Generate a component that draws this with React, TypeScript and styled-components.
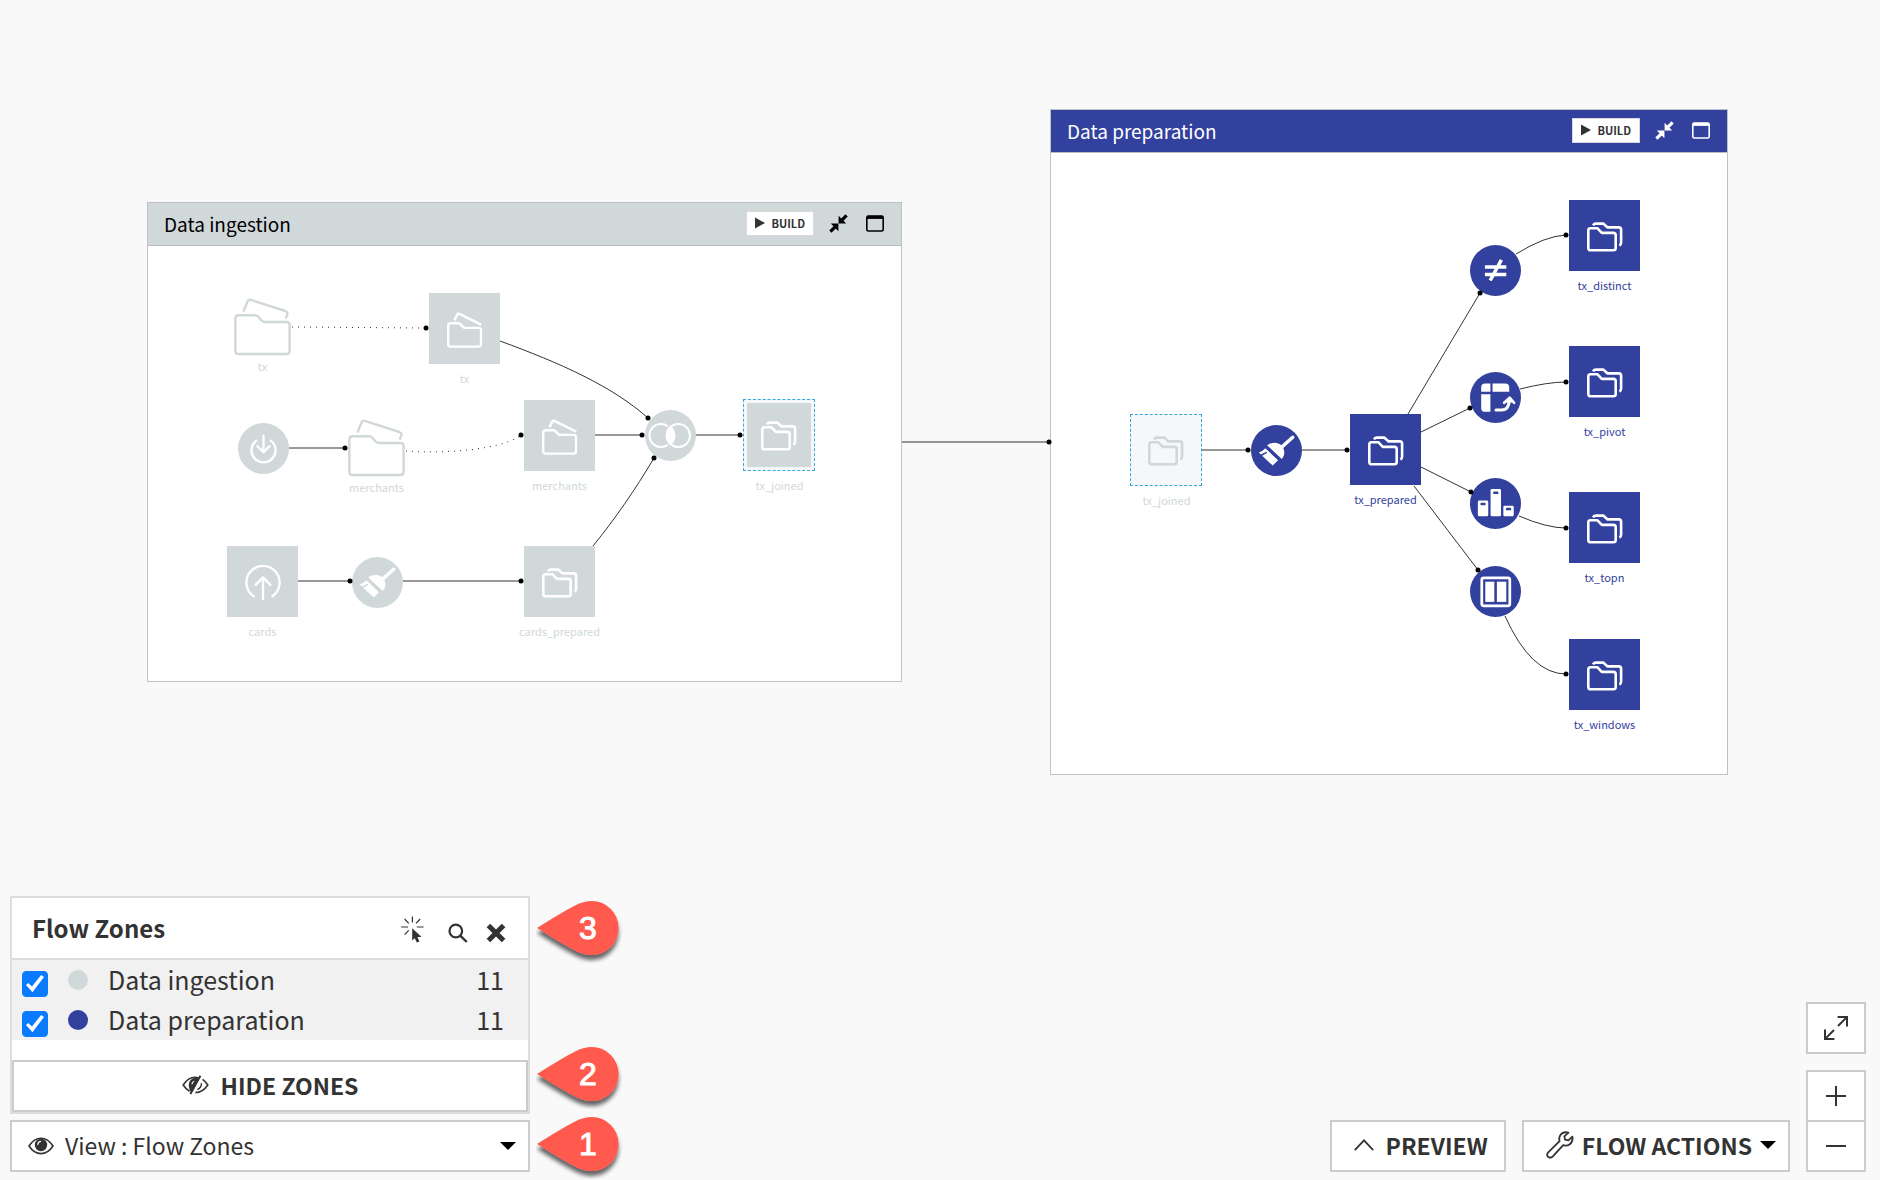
import React from "react";
import styled, { createGlobalStyle } from "styled-components";

const GREY = "#d0d8da";
const INDIGO = "#32419d";
const INK = "#333333";

const GlobalStyle = createGlobalStyle`
  *, *::before, *::after { box-sizing: border-box; }
  body {
    margin: 0;
    background: #f9f9f9;
    color: ${INK};
    font-family: "Noto Sans CJK SC", "Noto Sans", sans-serif;
  }
  button, select, input { font: inherit; color: inherit; margin: 0; }
  svg { display: block; flex: none; }
`;

const Page = styled.main`
  display: grid;
  grid-template: minmax(100vh, auto) / minmax(0, 1fr);
  overflow: hidden;
`;

/* ---------- canvas ---------- */

const Canvas = styled.section`
  grid-area: 1 / 1;
  position: relative;
`;

const ZoneLink = styled.svg`
  position: absolute;
  left: 902px;
  top: 432px;
`;

const Zone = styled.article<{ $x: number; $y: number; $w: number; $h: number }>`
  position: absolute;
  left: ${(p) => p.$x}px;
  top: ${(p) => p.$y}px;
  width: ${(p) => p.$w}px;
  height: ${(p) => p.$h}px;
  display: flex;
  flex-direction: column;
  border: 1px solid #bfc1c6;
  background: #ffffff;
`;

const ZoneHeader = styled.header<{ $bg: string; $fg: string }>`
  display: flex;
  align-items: center;
  height: 43px;
  padding: 0 17px 1px 16px;
  border-bottom: 1px solid #b9bdc4;
  background: ${(p) => p.$bg};
  color: ${(p) => p.$fg};
`;

const ZoneTitle = styled.h2`
  flex: 1;
  margin: 0;
  font-size: 19px;
  line-height: 24px;
  font-weight: 400;
`;

const BuildButton = styled.button`
  display: flex;
  align-items: center;
  gap: 6px;
  height: 25px;
  padding: 0 8px 1px;
  border: 1px solid #d9d9d9;
  background: #ffffff;
  color: ${INK};
  font-size: 11px;
  line-height: 16px;
  font-weight: 700;
`;

const IconButton = styled.button`
  display: flex;
  padding: 0;
  border: 0;
  background: none;
  color: inherit;
`;

const ZoneTools = styled.div`
  display: flex;
  align-items: center;
  gap: 15px;

  > ${IconButton} + ${IconButton} { margin-left: 3px; }
`;

const ZoneBody = styled.div`
  position: relative;
  flex: 1;
`;

const Edges = styled.svg`
  position: absolute;
  inset: 0;
  fill: none;
  stroke: #333333;
`;

const Node = styled.figure<{ $x: number; $y: number }>`
  position: absolute;
  left: ${(p) => p.$x}px;
  top: ${(p) => p.$y}px;
  width: 101px;
  margin: 0;
  display: flex;
  flex-direction: column;
  align-items: center;
`;

const DatasetTile = styled.div<{ $bg: string; $fg: string }>`
  display: grid;
  place-items: center;
  width: 71px;
  height: 71px;
  padding-top: 3px;
  background: ${(p) => p.$bg};
  color: ${(p) => p.$fg};
`;

const SharedTile = styled.div<{ $filled: boolean }>`
  width: 72px;
  height: 72px;
  margin-right: 1px;
  border: 1px dashed #35a8dc;
  padding: 3px;
  background: #f5f7f9;
  color: ${(p) => (p.$filled ? "#ffffff" : GREY)};

  > div {
    display: grid;
    place-items: center;
    width: 64px;
    height: 64px;
    padding-top: 2px;
    background: ${(p) => (p.$filled ? GREY : "transparent")};
  }
`;

const RecipeDisc = styled.div<{ $bg: string }>`
  display: grid;
  place-items: center;
  width: 51px;
  height: 51px;
  border-radius: 50%;
  background: ${(p) => p.$bg};
  color: #ffffff;
`;

const NodeLabel = styled.figcaption<{ $fg: string; $tight?: boolean }>`
  margin-top: ${(p) => (p.$tight ? 2 : 6)}px;
  font-size: 11px;
  line-height: 16px;
  white-space: nowrap;
  color: ${(p) => p.$fg};
`;

/* ---------- dock ---------- */

const Dock = styled.div`
  grid-area: 1 / 1;
  align-self: end;
  display: flex;
  justify-content: space-between;
  align-items: flex-end;
  padding: 0 14px 8px 10px;
`;

const ViewColumn = styled.div`
  display: flex;
  flex-direction: column;
  gap: 6px;
  width: 520px;
`;

const Panel = styled.section`
  border: 2px solid #dddddd;
  background: #ffffff;
`;

const Anchor = styled.div`
  position: relative;
`;

const PanelHeader = styled.header`
  position: relative;
  display: flex;
  align-items: center;
  height: 62px;
  padding: 0 22px 0 20px;
  border-bottom: 2px solid #dddddd;
`;

const PanelTitle = styled.h1`
  flex: 1;
  margin: 0;
  font-size: 24px;
  line-height: 32px;
  font-weight: 700;
`;

const PanelTools = styled.div`
  display: flex;
  align-items: flex-end;
  gap: 18px;
  padding-top: 3px;

  > ${IconButton}:first-child { margin-right: 6px; }
`;

const ZoneList = styled.ul`
  margin: 0 0 20px;
  padding: 0;
  list-style: none;
  background: #f1f1f1;
`;

const ZoneRow = styled.label`
  display: flex;
  align-items: center;
  height: 40px;
  padding: 0 24px 0 10px;
  font-size: 25px;
  line-height: 32px;
`;

const Check = styled.input`
  appearance: none;
  display: grid;
  place-items: center;
  width: 26px;
  height: 26px;
  border: 1px solid #888888;
  border-radius: 4px;
  background: #ffffff;

  ${ZoneRow} > & { margin-top: 8px; }

  &:checked {
    border-color: #0a7aff;
    background: #0a7aff;
  }
  &:checked::after {
    content: "";
    width: 18px;
    height: 18px;
    background: #ffffff;
    clip-path: polygon(0 56%, 13% 44%, 33% 64%, 84% 0, 100% 11%, 36% 96%);
  }
`;

const Swatch = styled.span<{ $bg: string }>`
  width: 20px;
  height: 20px;
  margin: 0 20px;
  border-radius: 50%;
  background: ${(p) => p.$bg};
`;

const RowText = styled.span<{ $grow?: boolean }>`
  flex: ${(p) => (p.$grow ? 1 : "none")};
  padding-bottom: 2px;
`;

const ActionButton = styled.button<{ $wide?: boolean; $gap: number; $end?: number }>`
  display: flex;
  align-items: center;
  justify-content: center;
  gap: ${(p) => p.$gap}px;
  width: ${(p) => (p.$wide ? "100%" : "auto")};
  height: 52px;
  padding: 0 ${(p) => p.$end ?? 16}px 2px ${(p) => (p.$wide ? 16 : 22)}px;
  border: 2px solid #cccccc;
  background: #ffffff;
  font-size: 23px;
  line-height: 32px;
  font-weight: 700;
  white-space: nowrap;
`;

const ViewPicker = styled.label`
  position: relative;
  display: flex;
  align-items: center;
  gap: 11px;
  height: 52px;
  padding: 0 12px 0 16px;
  border: 2px solid #cccccc;
  background: #ffffff;
`;

const ViewSelect = styled.select`
  appearance: none;
  flex: 1;
  height: 48px;
  padding: 0 0 2px;
  border: 0;
  background: none;
  font-size: 23px;
  line-height: 32px;
`;

const Marker = styled.span<{ $lift: number }>`
  position: absolute;
  left: calc(100% + 8px);
  top: 50%;
  display: grid;
  transform: translateY(-50%);
  margin-top: ${(p) => -p.$lift}px;

  > * { grid-area: 1 / 1; }
`;

const MarkerNumber = styled.b`
  place-self: center;
  padding-left: 14px;
  color: #ffffff;
  font: 400 32px/36px "Liberation Sans", Arial, sans-serif;
  -webkit-text-stroke: 1px #ffffff;
`;

const Controls = styled.div`
  display: flex;
  align-items: flex-end;
  gap: 16px;
`;

const ZoomColumn = styled.div`
  display: flex;
  flex-direction: column;
  gap: 16px;
`;

const ZoomPair = styled.div`
  display: flex;
  flex-direction: column;
`;

const SquareButton = styled.button`
  display: grid;
  place-items: center;
  width: 60px;
  height: 52px;
  padding: 0;
  border: 2px solid #cccccc;
  background: #ffffff;

  & + & { margin-top: -2px; }
`;

/* ---------- icons ---------- */

const FoldersIcon = () => (
  <svg width="36" height="31" viewBox="0 0 36 31" fill="none" stroke="currentColor" strokeWidth="2.6" strokeLinejoin="round">
    <path d="M3.4 6.3H10.5L14.8 10.9H26.4Q28.7 10.9 28.7 13.2V26Q28.7 28.3 26.4 28.3H3.6Q1.3 28.3 1.3 26V8.6Q1.3 6.3 3.4 6.3Z" />
    <path d="M6 3.4Q7 1.6 9 1.6H16.2L20.6 5.4H31.8Q34.1 5.4 34.1 7.7V20.5Q34.1 22.6 32.4 23.6" />
  </svg>
);

const OpenFolderIcon = () => (
  <svg width="36" height="36" viewBox="0 0 36 36" fill="none" stroke="currentColor" strokeWidth="2.4" strokeLinejoin="round">
    <path d="M4 11.3H12.3L17.3 15.9H31.6Q34 15.9 34 18.3V32.2Q34 34.6 31.6 34.6H3.6Q1.2 34.6 1.2 32.2V13.7Q1.2 11.3 4 11.3Z" />
    <path d="M7.4 8.4L10.4 2.4Q11 1.2 12.3 1.8L34.2 12.6" />
  </svg>
);

const BigFolder = () => (
  <svg width="57" height="58" viewBox="0 0 57 58" fill="none" stroke={GREY} strokeWidth="2.4">
    <path d="M4.6 17.2H20.6Q23 17.2 24.4 18.8L27 22Q28.6 24 31 24H52.4Q55.6 24 55.6 27.2V53Q55.6 56 52.4 56H4.6Q1.4 56 1.4 53V20.4Q1.4 17.2 4.6 17.2Z" />
    <path d="M9.4 13.6L13.6 3.2Q14.5 1.2 16.8 1.9L51.4 13Q54 14 53.4 16.4L51.6 20.6" />
  </svg>
);

const DownloadIcon = () => (
  <svg width="51" height="51" viewBox="0 0 52 52" fill="none" stroke="currentColor" strokeWidth="2.4" strokeLinecap="round" strokeLinejoin="round">
    <path d="M18.6 18A12.3 12.3 0 1 0 33.4 18" />
    <path d="M26 13V29.6M19.8 23.6L26 29.8L32.2 23.6" />
  </svg>
);

const UploadIcon = () => (
  <svg width="38" height="38" viewBox="0 0 38 38" fill="none" stroke="currentColor" strokeWidth="2.4" strokeLinecap="round" strokeLinejoin="round">
    <path d="M9.6 32.2A16.6 16.6 0 1 1 28.4 32.2" />
    <path d="M19 35V13.6M11.6 20.8L19 13.4L26.4 20.8" />
  </svg>
);

const BroomIcon = () => (
  <svg width="51" height="51" viewBox="0 0 52 52" fill="currentColor">
    <path d="M31.5 22.5L42.5 12.5" stroke="currentColor" strokeWidth="3.6" strokeLinecap="round" />
    <path d="M16.4 20.6Q20.4 18 24.6 18Q29.6 18.4 32 21.8Q34.8 25.6 33.6 30.6Q33 32.8 31.4 34.6Z" />
    <path d="M8 28Q12.6 26.4 14.6 23.8L27.6 36L22.2 41.4L11.4 31.4L16.6 28.4L15.8 27.2L10 30.2Z" />
  </svg>
);

const JoinIcon = () => (
  <svg width="51" height="51" viewBox="0 0 52 52" fill="none" stroke="currentColor" strokeWidth="2">
    <circle cx="34" cy="26" r="11.8" />
    <path d="M23.2 16.4A11.8 11.8 0 1 0 23.2 35.6" />
    <path d="M26 17.2A11.8 11.8 0 0 1 26 34.8A11.8 11.8 0 0 1 26 17.2Z" fill="currentColor" />
  </svg>
);

const DistinctIcon = () => (
  <svg width="51" height="51" viewBox="0 0 52 52" fill="none" stroke="currentColor" strokeWidth="3.6">
    <path d="M15.2 22.4H37M15.2 30H37M32 15.2L20.6 36.2" />
  </svg>
);

const PivotIcon = () => (
  <svg width="51" height="51" viewBox="0 0 52 52" fill="currentColor">
    <path d="M15.4 11.8H20.8V20.2H11.4V15.8Q11.4 11.8 15.4 11.8ZM23 11.8H36Q40 11.8 40 15.8V20.2H23ZM11.4 22.6H20.8V40.6H15.4Q11.4 40.6 11.4 36.6Z" />
    <path d="M26.6 38.8H32Q39.6 38.8 40 29" fill="none" stroke="currentColor" strokeWidth="3.2" strokeLinecap="round" />
    <path d="M34.8 31.4L40.4 26.2L45 31.4" fill="none" stroke="currentColor" strokeWidth="2.6" strokeLinecap="round" strokeLinejoin="round" />
    <path d="M36.4 31L40.2 27L43.6 31Z" />
  </svg>
);

const TopnIcon = () => (
  <svg width="51" height="51" viewBox="0 0 52 52" fill="currentColor">
    <rect x="8" y="23" width="10.6" height="16" rx="1.4" />
    <rect x="21" y="11.2" width="10.6" height="27.8" rx="1.4" />
    <rect x="34" y="28.4" width="10.6" height="10.6" rx="1.4" />
    <g fill={INDIGO}>
      <rect x="10.6" y="25.2" width="5.4" height="2.6" rx="1.2" />
      <rect x="23.6" y="13.8" width="5.4" height="2.6" rx="1.2" />
      <rect x="36.6" y="30.4" width="5.4" height="2.6" rx="1.2" />
    </g>
  </svg>
);

const WindowRecipeIcon = () => (
  <svg width="51" height="51" viewBox="0 0 52 52" fill="currentColor">
    <rect x="12" y="12" width="28.6" height="28.6" rx="2" fill="none" stroke="currentColor" strokeWidth="2.8" />
    <rect x="15.6" y="16" width="9.2" height="20.6" />
    <rect x="27.4" y="16" width="9.6" height="20.6" />
  </svg>
);

const PlayIcon = () => (
  <svg width="10" height="12" viewBox="0 0 10 12" fill="currentColor">
    <path d="M0 .5L10 6L0 11.5Z" />
  </svg>
);

const CollapseIcon = () => (
  <svg width="19" height="19" viewBox="0 0 19 19" fill="currentColor">
    <path d="M17.6 1.4L12.6 6.4M1.4 17.6L6.4 12.6" stroke="currentColor" strokeWidth="3.2" />
    <path d="M9.6 9.4V1.8L17.2 9.4ZM9.4 9.6V17.2L1.8 9.6Z" />
  </svg>
);

const WindowIcon = () => (
  <svg width="18" height="17" viewBox="0 0 18 17" fill="none" stroke="currentColor">
    <rect x=".8" y="1" width="16.4" height="15" rx="1.6" strokeWidth="1.6" />
    <path d="M1 2.4H17" strokeWidth="3" />
  </svg>
);

const RaysCursorIcon = () => (
  <svg width="23" height="27" viewBox="0 0 23 27" fill="currentColor">
    <path d="M11.4 .5V6.6M3.6 3L7.8 7.4M19.2 3L15 7.4M.2 11H7M15.8 11H22.6M3.6 18.6L7.8 14.4" fill="none" stroke="currentColor" strokeWidth="1.2" />
    <path d="M11.2 12.2L20.6 21H16.4L18.4 25.4L15.8 26.6L13.8 22.2L11.2 24.6Z" />
  </svg>
);

const SearchIcon = () => (
  <svg width="20" height="20" viewBox="0 0 20 20" fill="none" stroke="currentColor" strokeWidth="2.2">
    <circle cx="7.8" cy="8" r="6.3" />
    <path d="M12.2 12.6L18.8 19" strokeWidth="2.4" />
  </svg>
);

const CrossIcon = () => (
  <svg width="20" height="20" viewBox="0 0 20 20" fill="none" stroke="currentColor" strokeWidth="5">
    <path d="M2.4 2.4L17.6 17.6M17.6 2.4L2.4 17.6" />
  </svg>
);

const EyeIcon = () => (
  <svg width="26" height="18" viewBox="0 0 26 18">
    <path d="M1 9Q6 1.2 13 1.2T25 9Q20 16.6 13 16.6T1 9Z" fill="none" stroke="currentColor" strokeWidth="1.6" />
    <circle cx="13" cy="8" r="6.2" fill="currentColor" />
    <path d="M9.8 7.4Q10 4.8 12.6 4.4" fill="none" stroke="#ffffff" strokeWidth="1.2" strokeLinecap="round" />
  </svg>
);

const EyeOffIcon = () => (
  <svg width="27" height="20" viewBox="0 0 27 20" fill="none" stroke="currentColor" strokeWidth="1.6">
    <path d="M16.4 2.8Q14.8 2.3 13 2.3Q6.2 2.3 1.2 10Q4 14.4 7.6 16.2" />
    <path d="M17 2.8L9 17.2Q5.8 11.8 7.2 7.4Q9 3.2 13 3Z" fill="currentColor" stroke="none" />
    <path d="M18.4 .8L8.4 19" strokeWidth="2" />
    <path d="M9.9 9.2Q10.2 6.8 12.2 6.2" stroke="#ffffff" strokeWidth="1.2" />
    <path d="M20.6 4.4Q23.4 6.4 25.8 10Q20.8 17.4 13.4 17.6" />
    <path d="M19.4 8.2Q19.8 12.4 15.4 14.6" strokeWidth="1.4" />
  </svg>
);

const CaretIcon = () => (
  <svg width="16" height="8" viewBox="0 0 16 8" fill="#000000">
    <path d="M0 0H16L8 8Z" />
  </svg>
);

const ChevronUpIcon = () => (
  <svg width="20" height="12" viewBox="0 0 20 12" fill="none" stroke="currentColor" strokeWidth="1.8">
    <path d="M.8 11.2L10 1.4L19.2 11.2" />
  </svg>
);

const WrenchIcon = () => (
  <svg width="28" height="28" viewBox="0 0 28 28" fill="none" stroke="currentColor" strokeWidth="1.8" strokeLinejoin="round">
    <path d="M22.4 1.6Q17.2 .2 14.4 4Q12.6 6.8 13.6 10.2L2 21.6Q.2 23.8 2 25.8Q4.2 27.6 6.4 25.8L17.2 14.2Q20.8 15.4 23.8 13.2Q27.2 10.4 26.4 5.6L22.4 9.4L19 8.6L18.4 5.4Z" />
  </svg>
);

const ExpandIcon = () => (
  <svg width="24" height="24" viewBox="0 0 24 24" fill="none" stroke="currentColor" strokeWidth="2">
    <path d="M13.6 1H23V10.6M22.6 1.4L14 10M10.4 23H1V13.4M1.4 22.6L10 14" />
  </svg>
);

const PlusIcon = () => (
  <svg width="20" height="20" viewBox="0 0 20 20" stroke="currentColor" strokeWidth="2">
    <path d="M0 10H20M10 0V20" />
  </svg>
);

const MinusIcon = () => (
  <svg width="20" height="20" viewBox="0 0 20 20" stroke="currentColor" strokeWidth="2">
    <path d="M0 10H20" />
  </svg>
);

const StepMarker = ({ n, lift = 0 }: { n: number; lift?: number }) => (
  <Marker $lift={lift}>
    <svg width="90" height="70" viewBox="0 -5 90 70">
      <defs>
        <filter id={`drop${n}`} x="-20%" y="-20%" width="140%" height="150%">
          <feDropShadow dx="0" dy="5" stdDeviation="2" floodColor="#000000" floodOpacity="0.6" />
        </filter>
      </defs>
      <path
        d="M1 30Q28 13 40 7Q48 3 56 3A26.6 27 0 0 1 56 57Q48 57 40 53Q28 47 1 30Z"
        fill="#ff5a4d"
        filter={`url(#drop${n})`}
      />
    </svg>
    <MarkerNumber>{n}</MarkerNumber>
  </Marker>
);

/* ---------- flow data ---------- */

type IconType = () => React.JSX.Element;
type FlowNode = {
  kind: "tile" | "shared" | "ghost" | "disc" | "folder";
  x: number;
  y: number;
  label?: string;
  icon?: IconType;
};

type FlowEdge = { d: string; dot: [number, number]; dotted?: boolean };

type FlowZone = {
  title: string;
  color: string;
  text: string;
  box: [number, number, number, number];
  nodes: FlowNode[];
  edges: FlowEdge[];
};

const ZONES: FlowZone[] = [
  {
    title: "Data ingestion",
    color: GREY,
    text: "#000000",
    box: [147, 202, 755, 480],
    nodes: [
      { kind: "folder", x: 262, y: 298, label: "tx" },
      { kind: "tile", x: 464, y: 293, label: "tx", icon: OpenFolderIcon },
      { kind: "disc", x: 263, y: 423, icon: DownloadIcon },
      { kind: "folder", x: 376, y: 419, label: "merchants" },
      { kind: "tile", x: 559, y: 400, label: "merchants", icon: OpenFolderIcon },
      { kind: "disc", x: 670, y: 410, icon: JoinIcon },
      { kind: "shared", x: 779, y: 399, label: "tx_joined", icon: FoldersIcon },
      { kind: "tile", x: 262, y: 546, label: "cards", icon: UploadIcon },
      { kind: "disc", x: 377, y: 557, icon: BroomIcon },
      { kind: "tile", x: 559, y: 546, label: "cards_prepared", icon: FoldersIcon },
    ],
    edges: [
      { d: "M292 327L423 328", dot: [426, 328], dotted: true },
      { d: "M500 341C560 363 612 386 648 418", dot: [648, 418] },
      { d: "M289 448H345", dot: [345, 448] },
      { d: "M406 451C450 454 500 449 520 436", dot: [521, 435], dotted: true },
      { d: "M595 435H642", dot: [642, 435] },
      { d: "M696 435H740", dot: [740, 435] },
      { d: "M593 546C615 519 635 490 654 458", dot: [654, 458] },
      { d: "M298 581H350", dot: [350, 581] },
      { d: "M403 581H521", dot: [521, 581] },
    ],
  },
  {
    title: "Data preparation",
    color: INDIGO,
    text: "#ffffff",
    box: [1050, 109, 678, 666],
    nodes: [
      { kind: "ghost", x: 1166, y: 414, label: "tx_joined", icon: FoldersIcon },
      { kind: "disc", x: 1276, y: 425, icon: BroomIcon },
      { kind: "tile", x: 1385, y: 414, label: "tx_prepared", icon: FoldersIcon },
      { kind: "disc", x: 1495, y: 245, icon: DistinctIcon },
      { kind: "disc", x: 1495, y: 372, icon: PivotIcon },
      { kind: "disc", x: 1495, y: 478, icon: TopnIcon },
      { kind: "disc", x: 1495, y: 566, icon: WindowRecipeIcon },
      { kind: "tile", x: 1604, y: 200, label: "tx_distinct", icon: FoldersIcon },
      { kind: "tile", x: 1604, y: 346, label: "tx_pivot", icon: FoldersIcon },
      { kind: "tile", x: 1604, y: 492, label: "tx_topn", icon: FoldersIcon },
      { kind: "tile", x: 1604, y: 639, label: "tx_windows", icon: FoldersIcon },
    ],
    edges: [
      { d: "M1202 450H1248", dot: [1248, 450] },
      { d: "M1302 450H1347", dot: [1347, 450] },
      { d: "M1408 414L1480 293", dot: [1480, 293] },
      { d: "M1421 432L1470 408", dot: [1470, 408] },
      { d: "M1421 467L1471 492", dot: [1471, 492] },
      { d: "M1414 486L1478 570", dot: [1478, 570] },
      { d: "M1516 254Q1545 236 1566 235", dot: [1566, 235] },
      { d: "M1520 389Q1548 382 1566 382", dot: [1566, 382] },
      { d: "M1519 516Q1547 528 1566 528", dot: [1566, 528] },
      { d: "M1505 616Q1531 674 1566 674", dot: [1566, 674] },
    ],
  },
];

const HEADER_HEIGHT = 44;
const NODE_HALF_WIDTH = 50;

const FlowNodeView = ({ node, zone }: { node: FlowNode; zone: FlowZone }) => {
  const [zx, zy] = zone.box;
  const Icon = node.icon;
  const icon = Icon ? <Icon /> : null;
  const labelColor = node.kind === "ghost" ? GREY : zone.color;
  return (
    <Node $x={node.x - zx - 1 - NODE_HALF_WIDTH} $y={node.y - zy - HEADER_HEIGHT}>
      {node.kind === "tile" && (
        <DatasetTile $bg={zone.color} $fg="#ffffff">{icon}</DatasetTile>
      )}
      {(node.kind === "shared" || node.kind === "ghost") && (
        <SharedTile $filled={node.kind === "shared"}><div>{icon}</div></SharedTile>
      )}
      {node.kind === "disc" && <RecipeDisc $bg={zone.color}>{icon}</RecipeDisc>}
      {node.kind === "folder" && <BigFolder />}
      {node.label && (
        <NodeLabel $fg={labelColor} $tight={node.kind === "folder"}>{node.label}</NodeLabel>
      )}
    </Node>
  );
};

const ZoneView = ({ zone }: { zone: FlowZone }) => {
  const [x, y, w, h] = zone.box;
  const innerW = w - 2;
  const innerH = h - HEADER_HEIGHT - 1;
  return (
    <Zone $x={x} $y={y} $w={w} $h={h}>
      <ZoneHeader $bg={zone.color} $fg={zone.text}>
        <ZoneTitle>{zone.title}</ZoneTitle>
        <ZoneTools>
          <BuildButton type="button"><PlayIcon />BUILD</BuildButton>
          <IconButton type="button" aria-label="Collapse zone"><CollapseIcon /></IconButton>
          <IconButton type="button" aria-label="Open zone"><WindowIcon /></IconButton>
        </ZoneTools>
      </ZoneHeader>
      <ZoneBody>
        <Edges
          width={innerW}
          height={innerH}
          viewBox={`${x + 1} ${y + HEADER_HEIGHT} ${innerW} ${innerH}`}
          aria-hidden="true"
        >
          {zone.edges.map((e) => (
            <path key={e.d} d={e.d} strokeDasharray={e.dotted ? "1 5" : undefined} />
          ))}
        </Edges>
        {zone.nodes.map((n) => (
          <FlowNodeView key={`${n.x}-${n.y}`} node={n} zone={zone} />
        ))}
        <Edges
          width={innerW}
          height={innerH}
          viewBox={`${x + 1} ${y + HEADER_HEIGHT} ${innerW} ${innerH}`}
          aria-hidden="true"
        >
          {zone.edges.map((e) => (
            <circle key={e.d} cx={e.dot[0]} cy={e.dot[1]} r="2.5" fill="#000000" stroke="none" />
          ))}
        </Edges>
      </ZoneBody>
    </Zone>
  );
};

export default function App() {
  return (
    <Page>
      <GlobalStyle />
      <Canvas aria-label="Flow">
        <ZoneLink width="150" height="20" viewBox="0 0 150 20" aria-hidden="true">
          <path d="M0 10H147" stroke="#333333" />
        </ZoneLink>
        {ZONES.map((z) => (
          <ZoneView key={z.title} zone={z} />
        ))}
        <ZoneLink width="150" height="20" viewBox="0 0 150 20" aria-hidden="true">
          <circle cx="147" cy="10" r="2.5" />
        </ZoneLink>
      </Canvas>

      <Dock>
        <ViewColumn>
          <Panel>
            <PanelHeader>
              <PanelTitle>Flow Zones</PanelTitle>
              <PanelTools>
                <IconButton type="button" aria-label="Select zones"><RaysCursorIcon /></IconButton>
                <IconButton type="button" aria-label="Search"><SearchIcon /></IconButton>
                <IconButton type="button" aria-label="Close"><CrossIcon /></IconButton>
              </PanelTools>
              <StepMarker n={3} />
            </PanelHeader>
            <ZoneList>
              {ZONES.map((z) => (
                <li key={z.title}>
                  <ZoneRow>
                    <Check type="checkbox" defaultChecked />
                    <Swatch $bg={z.color} />
                    <RowText $grow>{z.title}</RowText>
                    <RowText>11</RowText>
                  </ZoneRow>
                </li>
              ))}
            </ZoneList>
            <Anchor>
              <ActionButton type="button" $wide $gap={12}><EyeOffIcon />HIDE ZONES</ActionButton>
              <StepMarker n={2} lift={12} />
            </Anchor>
          </Panel>
          <ViewPicker>
            <EyeIcon />
            <ViewSelect aria-label="View" defaultValue="zones">
              <option value="zones">View : Flow Zones</option>
            </ViewSelect>
            <CaretIcon />
            <StepMarker n={1} lift={2} />
          </ViewPicker>
        </ViewColumn>

        <Controls>
          <ActionButton type="button" $gap={12}><ChevronUpIcon />PREVIEW</ActionButton>
          <ActionButton type="button" $gap={8} $end={12} aria-haspopup="menu">
            <WrenchIcon />FLOW ACTIONS<CaretIcon />
          </ActionButton>
          <ZoomColumn>
            <SquareButton type="button" aria-label="Full screen"><ExpandIcon /></SquareButton>
            <ZoomPair>
              <SquareButton type="button" aria-label="Zoom in"><PlusIcon /></SquareButton>
              <SquareButton type="button" aria-label="Zoom out"><MinusIcon /></SquareButton>
            </ZoomPair>
          </ZoomColumn>
        </Controls>
      </Dock>
    </Page>
  );
}
